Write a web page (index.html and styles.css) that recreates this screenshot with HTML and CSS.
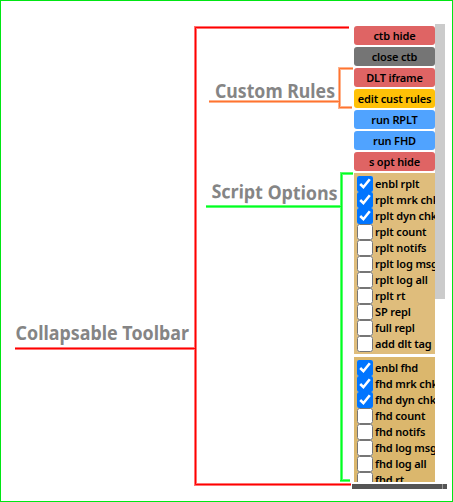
FILE: index.html
```html
<!DOCTYPE html>
<html lang="en">
<head>
<meta charset="utf-8">
<title>Toolbar overview</title>
<link rel="stylesheet" href="styles.css">
</head>
<body>
<main class="page">
  <svg class="notes" width="453" height="502" viewBox="0 0 453 502">
    <g class="line red">
      <path class="halo" d="M349 27.5H195.5V484.5H351M15 348.5H195"/>
      <path d="M349 27.5H195.5V484.5H351M15 348.5H195"/>
    </g>
    <g class="line orange">
      <path class="halo" d="M353 68.5H339.5V107.5H352M209 101.5H339"/>
      <path d="M353 68.5H339.5V107.5H352M209 101.5H339"/>
    </g>
    <g class="line green">
      <path class="halo" d="M353 173.5H341.5V480.5H350M340 480.5H342M206 206.5H341"/>
      <path d="M353 173.5H341.5V480.5H350M340 480.5H342M206 206.5H341"/>
    </g>
    <text x="215" y="98" textLength="120" lengthAdjust="spacingAndGlyphs">Custom Rules</text>
    <text x="211.5" y="198" textLength="126" lengthAdjust="spacingAndGlyphs" transform="rotate(1 212 198)">Script Options</text>
    <text x="15.5" y="340" textLength="173.5" lengthAdjust="spacingAndGlyphs">Collapsable Toolbar</text>
  </svg>
  <section class="toolbar">
    <div class="view">
      <div class="content">
        <button class="btn danger">ctb hide</button>
        <button class="btn muted">close ctb</button>
        <button class="btn danger">DLT iframe</button>
        <button class="btn warn">edit cust rules</button>
        <button class="btn run">run RPLT</button>
        <button class="btn run">run FHD</button>
        <button class="btn danger">s opt hide</button>
        <div class="options">
          <label><input type="checkbox" checked><span>enbl rplt</span></label>
          <label><input type="checkbox" checked><span>rplt mrk chk</span></label>
          <label><input type="checkbox" checked><span>rplt dyn chk</span></label>
          <label><input type="checkbox"><span>rplt count</span></label>
          <label><input type="checkbox"><span>rplt notifs</span></label>
          <label><input type="checkbox"><span>rplt log msg</span></label>
          <label><input type="checkbox"><span>rplt log all</span></label>
          <label><input type="checkbox"><span>rplt rt</span></label>
          <label><input type="checkbox"><span>SP repl</span></label>
          <label><input type="checkbox"><span>full repl</span></label>
          <label><input type="checkbox"><span>add dlt tag</span></label>
        </div>
        <div class="options fhd">
          <label><input type="checkbox" checked><span>enbl fhd</span></label>
          <label><input type="checkbox" checked><span>fhd mrk chk</span></label>
          <label><input type="checkbox" checked><span>fhd dyn chk</span></label>
          <label><input type="checkbox"><span>fhd count</span></label>
          <label><input type="checkbox"><span>fhd notifs</span></label>
          <label><input type="checkbox"><span>fhd log msg</span></label>
          <label><input type="checkbox"><span>fhd log all</span></label>
          <label><input type="checkbox"><span>fhd rt</span></label>
        </div>
      </div>
      <div class="scroll-thumb"></div>
    </div>
    <div class="handle"></div>
  </section>
</main>
</body>
</html>
```
FILE: styles.css
```css
* { box-sizing: border-box; }
body { margin: 0; background: #fff; }
.page {
  position: relative;
  width: 453px;
  height: 502px;
  padding: 23px 5px 0 0;
  border: 1px solid #00e613;
  overflow: hidden;
}
.notes { position: absolute; left: -1px; top: -1px; }
.notes text {
  font: 700 19px "Noto Sans", sans-serif;
  fill: #858585;
}
.line path { fill: none; stroke: currentColor; stroke-width: 1; }
.line .halo { stroke-width: 3; opacity: .55; }
.red { color: #f00; }
.orange { color: #ff7430; }
.green { color: #00ff20; }
.green .halo { opacity: .65; }

.toolbar { width: 95px; margin-left: auto; }
.view { display: flex; height: 458px; padding-left: 2px; }
.content {
  width: 81px;
  padding-top: 2px;
  overflow: hidden;
  font: 600 11px/16px "Noto Sans", "Open Sans", sans-serif;
  letter-spacing: -0.15px;
  color: #000;
}
.btn {
  display: block;
  width: 81px;
  height: 19px;
  margin: 0 0 2px;
  padding: 1px 0 0;
  border: 0;
  border-radius: 3px;
  font: inherit;
  letter-spacing: inherit;
  color: #000;
  white-space: nowrap;
}
.danger { background: #df6464; }
.muted { background: #757575; }
.warn { background: #ffc107; }
.run { background: #50a3ff; }
.options {
  height: 181px;
  padding: 3px 0 0 2.5px;
  background: #dfbd7c;
  overflow: hidden;
}
.fhd { margin-top: 3px; background: #dbb76d; }
.options label { display: flex; align-items: center; height: 16px; white-space: nowrap; }
.options input {
  flex: none;
  width: 16px;
  height: 16px;
  margin: 0 2.5px 0 0;
  accent-color: #0075ff;
}
.scroll-thumb { width: 10px; height: 275px; background: #cbcbcb; }
.handle {
  width: 95px;
  height: 5px;
  margin-top: 2px;
  background: linear-gradient(90deg, #555 90px, #999 90px 91px, #555 91px);
}
```
